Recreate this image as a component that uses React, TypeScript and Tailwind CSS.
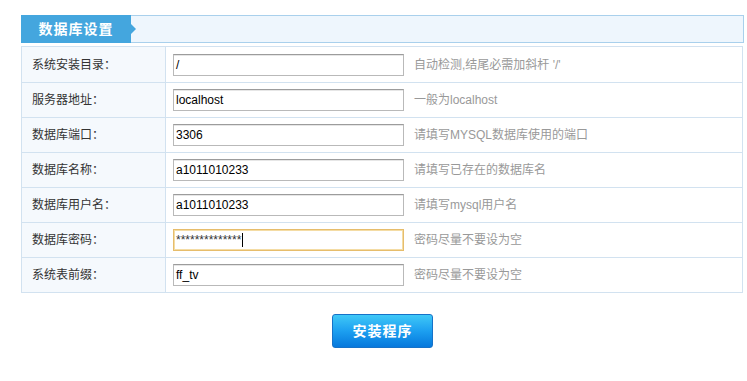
const rows = [
  { label: '系统安装目录：', value: '/', hint: '自动检测,结尾必需加斜杆 \'/\'' },
  { label: '服务器地址：', value: 'localhost', hint: '一般为localhost' },
  { label: '数据库端口：', value: '3306', hint: '请填写MYSQL数据库使用的端口' },
  { label: '数据库名称：', value: 'a1011010233', hint: '请填写已存在的数据库名' },
  { label: '数据库用户名：', value: 'a1011010233', hint: '请填写mysql用户名' },
  { label: '数据库密码：', value: '**************', hint: '密码尽量不要设为空', focus: true },
  { label: '系统表前缀：', value: 'ff_tv', hint: '密码尽量不要设为空' },
];

export default function App() {
  return (
    <div
      className="w-[747px] h-[381px] bg-white pt-[15px] pl-[21px]"
      style={{ fontFamily: '"Liberation Sans", "Noto Sans CJK SC", sans-serif' }}
    >
      {/* Title bar */}
      <div className="w-[723px] h-[28px] bg-[#eef6fd] border border-[#a9d0ec] flex items-stretch">
        <div className="relative w-[110px] -ml-px -my-px bg-[#44a6de] flex items-center justify-center">
          <span className="text-white font-bold text-[14px] tracking-[1px]">数据库设置</span>
          <div className="absolute -right-[5px] top-1/2 -translate-y-1/2 w-0 h-0 border-y-[5px] border-y-transparent border-l-[5px] border-l-[#44a6de]" />
        </div>
      </div>

      {/* Form table */}
      <div className="mt-[3px] w-[722px] border border-[#d2e2f0]">
        {rows.map((row, i) => (
          <div
            key={row.label}
            className={`flex h-[35px] ${i > 0 ? 'border-t border-[#d2e2f0]' : ''}`}
          >
            <div className="w-[144px] bg-[#f5f9fd] border-r border-[#d2e2f0] flex items-center pl-[10px] text-[12px] text-[#333]">
              {row.label}
            </div>
            <div className="flex-1 flex items-center pl-[7px]">
              <div
                className={`w-[231px] h-[22px] bg-white border flex items-center pl-[2px] text-[12px] text-black ${
                  row.focus
                    ? 'border-[#e6bd6c] shadow-[inset_0_0_0_1px_#f4dca4]'
                    : 'border-[#b9b9b9] border-t-[#9c9c9c] shadow-[inset_0_1px_0_#e6e6e6]'
                }`}
              >
                <span className={row.focus ? 'text-[#333]' : ''}>{row.value}</span>
                {row.focus && <span className="w-px h-[14px] bg-black ml-px" />}
              </div>
              <span className="ml-[10px] text-[12px] text-[#999]">{row.hint}</span>
            </div>
          </div>
        ))}
      </div>

      {/* Submit */}
      <div className="w-[723px] flex justify-center pt-[21px]">
        <button className="w-[101px] h-[34px] rounded-[3px] border border-[#1672c8] bg-gradient-to-b from-[#3fc8f7] via-[#1c9ff0] to-[#0778dc] text-white text-[14px] font-bold tracking-[1px]">
          安装程序
        </button>
      </div>
    </div>
  );
}
